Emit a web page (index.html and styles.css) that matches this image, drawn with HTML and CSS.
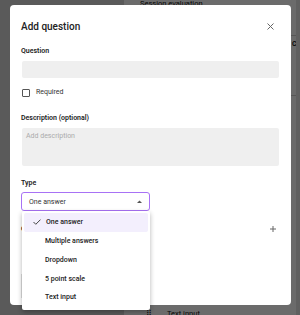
FILE: index.html
```html
<!DOCTYPE html>
<html lang="en">
<head>
    <meta charset="UTF-8">
    <meta name="viewport" content="width=device-width, initial-scale=1.0">
    <title>Add question</title>
    <link rel="stylesheet" href="styles.css">
</head>
<body>
    <div class="page">
        <div class="sidebar"></div>
        <div class="main">
            <div class="main-title">Session evaluation</div>
            <div class="main-row first"></div>
            <div class="main-row">Choose an option</div>
            <div class="main-foot">
                <span class="drag">⠿</span>
                <span>Text input</span>
            </div>
        </div>
        <div class="scroll"></div>
    </div>

    <div class="backdrop"></div>

    <div class="modal">
        <div class="modal-header">
            <h1>Add question</h1>
            <svg class="close" width="7" height="7" viewBox="0 0 7 7">
                <path d="M0.5 0.5 L6.5 6.5 M6.5 0.5 L0.5 6.5" stroke="#666" stroke-width="1" fill="none"/>
            </svg>
        </div>

        <label class="field-label">Question</label>
        <div class="input"></div>

        <div class="check-row">
            <span class="checkbox"></span>
            <span>Required</span>
        </div>

        <label class="field-label desc-label">Description (optional)</label>
        <div class="textarea">Add description</div>

        <label class="field-label">Type</label>
        <div class="select-wrap">
            <div class="select">
                <span>One answer</span>
                <svg width="5" height="3" viewBox="0 0 5 3"><path d="M0 3 L2.5 0.5 L5 3 Z" fill="#555"/></svg>
            </div>
            <ul class="menu">
                <li class="menu-item selected">
                    <svg class="check" width="8" height="6" viewBox="0 0 8 6"><path d="M0.5 3 L2.8 5.3 L7.5 0.6" stroke="#444" stroke-width="1" fill="none"/></svg>
                    One answer
                </li>
                <li class="menu-item">Multiple answers</li>
                <li class="menu-item">Dropdown</li>
                <li class="menu-item">5 point scale</li>
                <li class="menu-item">Text input</li>
            </ul>
        </div>

        <div class="options-row">
            <span>Options</span>
            <svg class="plus" width="6" height="6" viewBox="0 0 6 6"><path d="M3 0 V6 M0 3 H6" stroke="#666" stroke-width="1" fill="none"/></svg>
        </div>
        <div class="option-box"></div>
    </div>
</body>
</html>
```

FILE: styles.css
```css
* {
    box-sizing: border-box;
}
body {
    margin: 0;
    width: 300px;
    height: 315px;
    overflow: hidden;
    font-family: Roboto, "Liberation Sans", sans-serif;
    color: #222;
    position: relative;
}
.page {
    display: flex;
    height: 315px;
}
.sidebar {
    width: 124px;
    flex-shrink: 0;
    background: #d6d6d6;
}
.main {
    flex: 1;
    min-width: 0;
    overflow: hidden;
    display: flex;
    flex-direction: column;
    background: #fff;
    padding-left: 16px;
}
.scroll {
    width: 4px;
    flex-shrink: 0;
    background: #e4e4e4;
}
.main-title {
    font-size: 7.5px;
    line-height: 8px;
    height: 8px;
    color: #111;
    white-space: nowrap;
}
.main-row {
    border-bottom: 1px solid #cfcfcf;
    font-size: 7px;
    font-weight: 600;
    padding-left: 152px;
    white-space: nowrap;
    color: #111;
    height: 60px;
    padding-top: 4px;
}
.main-row.first {
    height: 28px;
}
.main-foot {
    margin-top: auto;
    display: flex;
    gap: 15px;
    font-size: 7.5px;
    line-height: 10px;
    height: 6px;
    padding-left: 6px;
    color: #111;
    white-space: nowrap;
}
.drag {
    color: #333;
}
.backdrop {
    position: absolute;
    inset: 0;
    background: rgba(0, 0, 0, 0.58);
}
.modal {
    position: absolute;
    left: 10px;
    top: 5px;
    width: 281px;
    height: 300px;
    background: #fff;
    border-radius: 4px;
    padding: 12px 11px 0 11px;
    display: flex;
    flex-direction: column;
    align-items: flex-start;
}
.modal-header {
    align-self: stretch;
    display: flex;
    align-items: center;
    justify-content: space-between;
    height: 18px;
    padding-right: 6px;
    margin-bottom: 11px;
}
h1 {
    margin: 0;
    font-size: 10px;
    font-weight: 500;
    color: #222;
}
.field-label {
    font-size: 7px;
    font-weight: 600;
    color: #222;
    line-height: 10px;
    height: 10px;
}
.input {
    margin: 5px 0 0 1px;
    width: 257px;
    height: 17px;
    background: #efefef;
    border-radius: 2px;
}
.check-row {
    display: flex;
    align-items: center;
    gap: 6px;
    font-size: 7px;
    line-height: 9px;
    color: #333;
    margin: 10px 0 0 1px;
}
.checkbox {
    width: 8px;
    height: 8px;
    border: 1px solid #555;
    border-radius: 1px;
}
.desc-label {
    margin-top: 16px;
}
.textarea {
    margin: 5px 0 12px 1px;
    width: 257px;
    height: 38px;
    background: #efefef;
    border-radius: 2px;
    font-size: 7px;
    line-height: 9px;
    color: #ababab;
    padding: 4px 4px;
}
.select-wrap {
    position: relative;
    margin-top: 4px;
    width: 129px;
}
.select {
    height: 19px;
    border: 1.3px solid #a872f5;
    border-radius: 3px;
    display: flex;
    align-items: center;
    justify-content: space-between;
    padding: 0 7px 0 7px;
    font-size: 7px;
    color: #333;
}
.menu {
    position: absolute;
    top: 19px;
    left: 1px;
    width: 128px;
    margin: 0;
    padding: 2px 2px 3px;
    list-style: none;
    background: #fff;
    border-radius: 2px;
    box-shadow: 0 2px 5px rgba(0, 0, 0, 0.3);
    z-index: 2;
}
.menu-item {
    height: 18.75px;
    display: flex;
    align-items: center;
    padding-left: 21px;
    font-size: 7px;
    font-weight: 500;
    color: #222;
    border-radius: 2px;
}
.menu-item.selected {
    background: #f3effd;
    padding-left: 9px;
}
.check {
    margin-right: 5px;
}
.options-row {
    align-self: stretch;
    display: flex;
    justify-content: space-between;
    align-items: center;
    margin-top: 13px;
    height: 10px;
    font-size: 7px;
    font-weight: 600;
    padding-right: 4px;
}
.option-box {
    margin: 40px 0 0 0;
    width: 4px;
    height: 24px;
    border-left: 1px solid #ddd;
}
```
